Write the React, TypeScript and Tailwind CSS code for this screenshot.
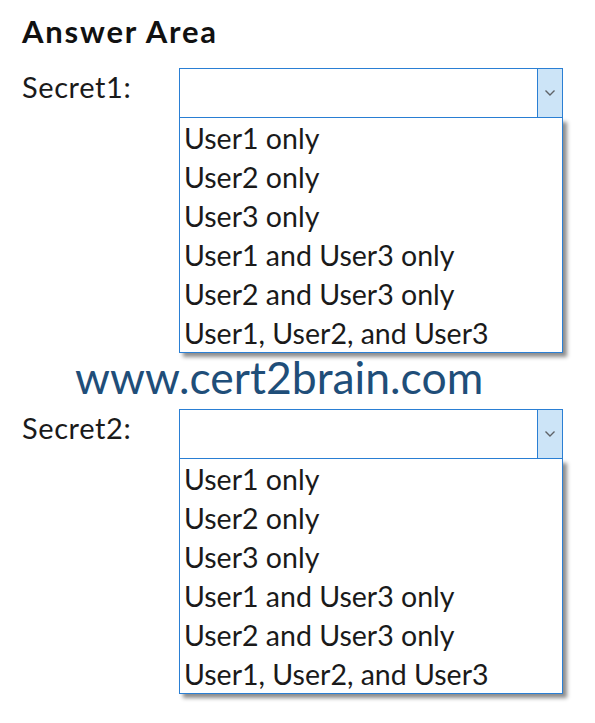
import React from "react";

const options = [
  "User1 only",
  "User2 only",
  "User3 only",
  "User1 and User3 only",
  "User2 and User3 only",
  "User1, User2, and User3",
];

function Chevron() {
  return (
    <svg width="12" height="8" viewBox="0 0 12 8" fill="none">
      <path d="M1.5 1.5 L6 6 L10.5 1.5" stroke="#5f6368" strokeWidth="1.4" fill="none" />
    </svg>
  );
}

function DropBlock({ label }: { label: string }) {
  return (
    <div className="flex">
      <div className="w-[157px] mt-[5px] text-[29px] leading-[28px] tracking-[0.6px] text-[#1a1a1a]">{label}</div>
      <div className="w-[384px]">
        <div className="flex h-[50px] border-[1.5px] border-[#2a7fd4] bg-white">
          <div className="flex-1" />
          <div className="flex w-[25px] items-center justify-center border-l-[1.5px] border-[#2a7fd4] bg-[#cce4f7]">
            <Chevron />
          </div>
        </div>
        <div className="border-[1.5px] border-t-0 border-[#2a7fd4] bg-white shadow-[4px_4px_4px_rgba(0,0,0,0.45)]">
          {options.map((o) => (
            <div key={o} className="h-[39px] pl-[4px] text-[28.5px] leading-[41px] text-[#1a1a1a] whitespace-nowrap">
              {o}
            </div>
          ))}
        </div>
      </div>
    </div>
  );
}

export default function App() {
  return (
    <div className="w-[595px] h-[723px] bg-white pl-[22px] pt-[16px]" style={{ fontFamily: "Lato, sans-serif" }}>
      <div className="text-[31px] leading-[31px] font-bold tracking-[1.8px] text-[#111]">Answer Area</div>
      <div className="mt-[21px]">
        <DropBlock label="Secret1:" />
      </div>
      <div className="pl-[53px] h-[56px] text-[44.5px] leading-[48px] text-[#1f4e79] whitespace-nowrap">www.cert2brain.com</div>
      <DropBlock label="Secret2:" />
    </div>
  );
}
